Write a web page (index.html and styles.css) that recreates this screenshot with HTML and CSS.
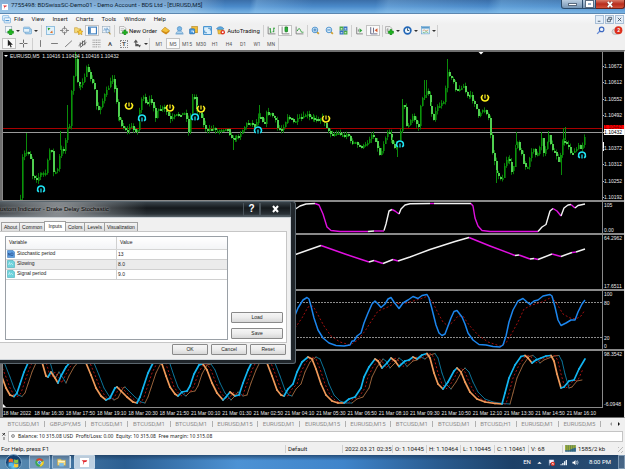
FILE: index.html
```html
<!DOCTYPE html>
<html lang="en">
<head>
<meta charset="utf-8">
<title>7755498: BDSwissSC-Demo01 - Demo Account - BDS Ltd - [EURUSD,M5]</title>
<link rel="stylesheet" href="styles.css">
</head>
<body>
<header class="titlebar">
  <svg class="app-logo" viewBox="0 0 16 16"><rect width="16" height="16" fill="#fff"/><path d="M3 4h10l-2 3H8l-3 6 1-6z" fill="#e0282e"/></svg>
  <h1>7755498: BDSwissSC-Demo01 - Demo Account - BDS Ltd - [EURUSD,M5]</h1>
  <div class="winctl">
    <button class="min" aria-label="Minimize"><i></i></button>
    <button class="max" aria-label="Maximize"><i></i></button>
    <button class="close" aria-label="Close"><svg viewBox="0 0 16 16"><path d="M3 2l10 12M13 2L3 14" stroke="#6b2a20" stroke-width="6"/><path d="M3 2l10 12M13 2L3 14" stroke="#fff" stroke-width="4"/></svg></button>
  </div>
</header>
<nav class="menubar">
  <svg class="ico" viewBox="0 0 16 16"><rect x="1" y="1" width="11" height="9" rx="1" fill="#dff0fc" stroke="#5fa3dc"/><rect x="4" y="5" width="11" height="9" rx="1" fill="#eef7fd" stroke="#4a90d0"/><path d="M6 10h7" stroke="#4a90d0" stroke-width="2"/></svg>
  <button>File</button><button>View</button><button>Insert</button><button>Charts</button><button>Tools</button><button>Window</button><button>Help</button>
  <div class="mdi">
    <button aria-label="Minimize chart"><svg viewBox="0 0 8 8"><path d="M2 6h3" stroke="#456"/></svg></button>
    <button aria-label="Restore chart"><svg viewBox="0 0 8 8"><path d="M3 3V1.500h3.500V4H5M1.500 3.500H5v3H1.500z" fill="none" stroke="#456"/></svg></button>
    <button aria-label="Close chart"><svg viewBox="0 0 8 8"><path d="M2 2l4 4M6 2L2 6" stroke="#456"/></svg></button>
  </div>
</nav>
<div class="toolbar">
  <div class="group lead">
    <button class="drop" aria-label="New chart"><svg class="ico" viewBox="0 0 16 16"><rect x="1" y="1" width="11" height="10" fill="#f4f8fb" stroke="#8aa0b4"/><path d="M8 6h4v3h3v4h-3v3H8v-3H5V9h3z" fill="#1fb51f" stroke="#0c7f10"/></svg></button>
    <button class="drop" aria-label="Profiles"><svg class="ico" viewBox="0 0 16 16"><rect x="4" y="5" width="11" height="9" rx="1" fill="#b9dbf2" stroke="#4c8dc2"/><rect x="1" y="2" width="11" height="9" rx="1" fill="#e4f2fb" stroke="#4c8dc2"/><path d="M2 4h9" stroke="#6fb0e0" stroke-width="2"/></svg></button>
  </div>
  <div class="group five">
    <button aria-label="Market watch"><svg class="ico" viewBox="0 0 16 16"><rect x="1" y="1" width="14" height="14" fill="#e2f1fa" stroke="#4f9ad0"/><path d="M3 3l5 1-4 4z" fill="#2ca02c"/><path d="M12 13l-5-1 4-4z" fill="#e07028"/></svg></button>
    <button aria-label="Data window"><svg class="ico" viewBox="0 0 16 16"><circle cx="8" cy="8" r="4.500" fill="none" stroke="#777" stroke-width="1.500"/><path d="M8 0v6M8 10v6M0 8h6M10 8h6" stroke="#777" stroke-width="1.500"/></svg></button>
    <button aria-label="Navigator"><svg class="ico" viewBox="0 0 16 16"><path d="M1 3h5l1 2h5v7H1z" fill="#f5d978" stroke="#c49a30"/><path d="M11 6l1.500 3 3.500.5-2.500 2.500.6 3.500-3.100-1.600-3.100 1.600.6-3.500L6 9.500 9.500 9z" fill="#ffd23e" stroke="#b98412"/></svg></button>
    <button class="on" aria-label="Terminal"><svg class="ico" viewBox="0 0 16 16"><rect x="1" y="2" width="14" height="12" fill="#fff" stroke="#3d7fc0" stroke-width="2"/><rect x="2" y="3" width="3" height="10" fill="#3d7fc0"/></svg></button>
    <button aria-label="Strategy tester"><svg class="ico" viewBox="0 0 16 16"><rect x="1" y="1" width="13" height="11" fill="#eef4f9" stroke="#90a6b8"/><path d="M3 9l2-5 2 4 2-5 2 5" fill="none" stroke="#4f8fc8"/><circle cx="10" cy="9" r="3" fill="#d7ecfa" stroke="#5588b8"/><path d="M12 11l3 4" stroke="#b59340" stroke-width="2"/></svg></button>
  </div>
  <div class="group orders">
    <button class="wide" aria-label="New Order"><svg class="ico" viewBox="0 0 16 16"><path d="M1 1h8l3 3v9H1z" fill="#fafafa" stroke="#888"/><path d="M3 5h6M3 8h6" stroke="#888"/><path d="M9 7h3v3h3v3h-3v3H9v-3H6v-3h3z" fill="#1fb51f" stroke="#0c7f10"/></svg>New Order</button>
    <button aria-label="MetaEditor"><svg class="ico" viewBox="0 0 16 16"><path d="M1 8l6-6 8 6-6 6z" fill="#f3c23c" stroke="#b67f14"/><path d="M1 8l8 3 6-3v2l-6 5-8-5z" fill="#d18c18"/></svg></button>
    <button aria-label="Cloud"><svg class="ico" viewBox="0 0 16 16"><circle cx="8" cy="5" r="4" fill="#7db9e8" stroke="#3b80bc"/><path d="M2 13c0-5 12-5 12 0z" fill="#bcdcf3" stroke="#5593c6"/><path d="M1 14h14" stroke="#6ea6d4" stroke-width="2"/></svg></button>
    <button aria-label="Market"><svg class="ico" viewBox="0 0 16 16"><rect x="5" y="1" width="10" height="11" fill="#f2bd34" stroke="#ae7a10"/><rect x="1" y="5" width="9" height="9" rx="1" fill="#4b9be0" stroke="#1d62a2"/><path d="M4 9h4v3" stroke="#fff" stroke-width="1.500" fill="none"/></svg></button>
    <button aria-label="Full screen"><svg class="ico" viewBox="0 0 16 16"><rect x="1" y="1" width="14" height="14" rx="1" fill="#dceffb" stroke="#4a96d2" stroke-width="2"/><path d="M9 4h4v4M7 12H3V8" fill="none" stroke="#3a86c4" stroke-width="1.500"/></svg></button>
    <button class="wide auto" aria-label="AutoTrading"><svg class="ico" viewBox="0 0 16 16"><path d="M1 5c3-5 10-5 13 0l-6 4z" fill="#58a9e4" stroke="#2b6ea8"/><path d="M3 7h10l-2 7H4z" fill="#f0c340" stroke="#b8881c"/><circle cx="12" cy="11" r="4" fill="#de3424"/><rect x="10.500" y="9.500" width="3" height="3" fill="#fff"/></svg>AutoTrading</button>
  </div>
  <div class="group tight">
    <button aria-label="Bar chart"><svg class="ico" viewBox="0 0 16 16"><path d="M2 1v13h13" fill="none" stroke="#777" stroke-width="1.500"/><path d="M6 4v8M6 5H4M6 11h2M12 3v8M12 4h2M12 10h-2" stroke="#219a2c" stroke-width="1.600"/></svg></button>
    <button class="on" aria-label="Candlesticks"><svg class="ico" viewBox="0 0 16 16"><path d="M2 1v13h13" fill="none" stroke="#777" stroke-width="1.500"/><path d="M9 0v12" stroke="#156f1c"/><rect x="7" y="2" width="5" height="8" fill="#26b336" stroke="#156f1c"/></svg></button>
    <button aria-label="Line chart"><svg class="ico" viewBox="0 0 16 16"><path d="M2 1v13h13" fill="none" stroke="#777" stroke-width="1.500"/><path d="M4 9c2-6 5-5 6-1s3 3 5 3" fill="none" stroke="#219a2c" stroke-width="1.600"/></svg></button>
  </div>
  <div class="group tight">
    <button aria-label="Zoom in"><svg class="ico" viewBox="0 0 16 16"><path d="M9 9l5 5" stroke="#d0a033" stroke-width="3"/><circle cx="7" cy="7" r="5" fill="#d4ebfb" stroke="#3d87c8" stroke-width="1.500"/><path d="M4 7h6M7 4v6" stroke="#2e75b6" stroke-width="1.500"/></svg></button>
    <button aria-label="Zoom out"><svg class="ico" viewBox="0 0 16 16"><path d="M9 9l5 5" stroke="#d0a033" stroke-width="3"/><circle cx="7" cy="7" r="5" fill="#d4ebfb" stroke="#3d87c8" stroke-width="1.500"/><path d="M4 7h6" stroke="#2e75b6" stroke-width="1.500"/></svg></button>
    <button aria-label="Tile windows"><svg class="ico" viewBox="0 0 16 16"><path d="M1 1h7v7H1zM8 8h7v7H8z" fill="#48a848"/><path d="M8 1h7v7H8zM1 8h7v7H1z" fill="#3571c4"/><path d="M3 4h3v2H3zM10 4h3v2h-3zM3 11h3v2H3zM10 11h3v2h-3z" fill="#e9f4e6"/></svg></button>
  </div>
  <div class="group shift">
    <button aria-label="Auto scroll"><svg class="ico" viewBox="0 0 16 16"><path d="M3 2v12h11M6 10V6" fill="none" stroke="#777" stroke-width="1.500"/><path d="M8 4l5 4-5 4z" fill="#2ea83c"/></svg></button>
    <button class="on" aria-label="Chart shift"><svg class="ico" viewBox="0 0 16 16"><path d="M3 2v12h12M8 3v9" fill="none" stroke="#557" stroke-width="1.500"/><path d="M15 4v7l-5-3.500z" fill="#d4552a"/></svg></button>
  </div>
  <div class="group">
    <button class="drop" aria-label="Indicators"><svg class="ico" viewBox="0 0 16 16"><path d="M1 1h8l3 3v9H1z" fill="#f2f2f2" stroke="#888"/><path d="M6 4c-2 0-2 1-2 7M3 7h4" fill="none" stroke="#777"/><path d="M9 6h3v3h3v4h-3v3H9v-3H6V9h3z" fill="#1fb51f" stroke="#0c7f10"/></svg></button>
    <button class="drop" aria-label="Periods"><svg class="ico" viewBox="0 0 16 16"><circle cx="8" cy="8" r="6" fill="#f1f8fd" stroke="#2468b8" stroke-width="3"/><path d="M8 4v4h3" fill="none" stroke="#245" stroke-width="1.500"/></svg></button>
    <button class="drop" aria-label="Templates"><svg class="ico" viewBox="0 0 16 16"><rect x="1" y="1" width="14" height="13" fill="#e6f2fa" stroke="#5a9acb"/><path d="M1 3h14" stroke="#5a9acb" stroke-width="3"/><path d="M3 8l3-1 3 2 4-2" fill="none" stroke="#d07a2c"/><path d="M3 11l3 1 3-2 4 2" fill="none" stroke="#3aa045"/></svg></button>
  </div>
  <div class="right">
    <button aria-label="Search"><svg class="ico" viewBox="0 0 16 16"><path d="M7 9l-5 5" stroke="#6a8fd8" stroke-width="2.500"/><circle cx="10" cy="6" r="4" fill="#eef3fb" stroke="#3c68c0" stroke-width="2"/></svg></button>
    <button class="notify" aria-label="Notifications"><svg viewBox="0 0 16 14"><ellipse cx="6" cy="8" rx="5" ry="4" fill="#dcdcdc" stroke="#b0b0b0"/><circle cx="10" cy="6" r="5.500" fill="#dc2f1c"/></svg><span>2</span></button>
  </div>
</div>
<div class="toolbar">
  <div class="group lead pair">
    <button class="on" aria-label="Cursor"><svg class="ico" viewBox="0 0 16 16"><path d="M5 1v12l3-3 2 5 2-1-2-4h4z" fill="#222"/></svg></button>
    <button aria-label="Crosshair"><svg class="ico" viewBox="0 0 16 16"><path d="M8 1v6M8 9v6M1 8h6M9 8h6" stroke="#555" stroke-width="1.500"/></svg></button>
  </div>
  <div class="group lines">
    <button aria-label="Vertical line"><svg class="ico" viewBox="0 0 16 16"><path d="M8 2v12" stroke="#666" stroke-width="1.500"/></svg></button>
    <button aria-label="Horizontal line"><svg class="ico" viewBox="0 0 16 16"><path d="M2 8h12" stroke="#666" stroke-width="1.500"/></svg></button>
    <button aria-label="Trendline"><svg class="ico" viewBox="0 0 16 16"><path d="M2 14L14 3" stroke="#666" stroke-width="1.500"/></svg></button>
    <button aria-label="Channel"><svg class="ico" viewBox="0 0 16 16"><path d="M1 12L13 2M4 15L15 6M4 6v8M8 3v9M12 3v8" stroke="#555" stroke-width="1.500"/></svg></button>
    <button aria-label="Fibonacci"><svg class="ico" viewBox="0 0 16 16"><path d="M1 2h14M1 6h14M1 10h14M1 14h8M11 14h4" stroke="#888" stroke-width="1.500" stroke-dasharray="2 1"/></svg></button>
    <button aria-label="Text" class="letter">A</button>
    <button aria-label="Text label" class="letter"><b>T</b></button>
    <button class="drop" aria-label="Arrows"><svg class="ico" viewBox="0 0 16 16"><path d="M5 1l4 5H6v3h4v2l4-1-2 5-2-2H4V6H1z" fill="#555"/></svg></button>
  </div>
  <div class="group frames">
    <button>M1</button><button class="on">M5</button><button>M15</button><button>M30</button><button>H1</button><button>H4</button><button>D1</button><button>W1</button><button>MN</button>
  </div>
</div>
<main class="workspace">
  <section class="chart">
    <div class="plot p1">
      <svg id="price" viewBox="3 52 599 148" preserveAspectRatio="none"></svg>
      <div class="quote">EURUSD,M5&nbsp; 1.10416 1.10434 1.10416 1.10432</div>
    </div>
    <div class="axis a1"><span>1.10672</span><span>1.10612</span><span>1.10552</span><span>1.10492</span><span class="bid">1.10432<b>1.10442</b></span><span>1.10372</span><span>1.10312</span><span>1.10252</span><span>1.10192</span></div>
    <div class="plot sub"><svg id="cycle" viewBox="3 202 599 31" preserveAspectRatio="none"></svg></div>
    <div class="axis sub"><span>105</span><span>0.00</span></div>
    <div class="plot sub"><svg id="trend" viewBox="3 235 599 54" preserveAspectRatio="none"></svg></div>
    <div class="axis sub"><span>64.2962</span><span>17.6511</span></div>
    <div class="plot sub"><svg id="stoch" viewBox="3 291 599 58" preserveAspectRatio="none"></svg></div>
    <div class="axis sub levels"><span>100</span><span>80</span><span class="gap"></span><span>20</span><span>0</span></div>
    <div class="plot sub"><svg id="drake" viewBox="3 351 599 56" preserveAspectRatio="none"></svg></div>
    <div class="axis sub"><span>98.3542</span><span>-6.0948</span></div>
    <div class="times"><span>18 Mar 2022</span><span>18 Mar 16:30</span><span>18 Mar 17:50</span><span>18 Mar 19:10</span><span>18 Mar 20:30</span><span>18 Mar 21:50</span><span>21 Mar 00:10</span><span>21 Mar 01:30</span><span>21 Mar 02:50</span><span>21 Mar 04:10</span><span>21 Mar 05:30</span><span>21 Mar 06:50</span><span>21 Mar 08:10</span><span>21 Mar 09:30</span><span>21 Mar 10:50</span><span>21 Mar 12:10</span><span>21 Mar 13:30</span><span>21 Mar 14:50</span><span>21 Mar 16:10</span></div>
  </section>
  <section class="dialog" role="dialog" aria-label="Custom Indicator">
    <div class="dlg-title"><h2>ustom Indicator - Drake Delay Stochastic</h2><button aria-label="Help">?</button><button class="x" aria-label="Close"><svg viewBox="0 0 16 16"><path d="M3 2l10 12M13 2L3 14" stroke="#fff" stroke-width="4"/></svg></button></div>
    <div class="dlg-body">
      <div class="dlg-tabs" role="tablist"><button role="tab">About</button><button role="tab">Common</button><button role="tab" class="sel">Inputs</button><button role="tab">Colors</button><button role="tab">Levels</button><button role="tab">Visualization</button></div>
      <div class="page">
        <div class="list">
          <table>
            <thead><tr><th>Variable</th><th>Value</th></tr></thead>
            <tbody>
              <tr><td><svg class="type" viewBox="0 0 16 16"><path d="M1 1h11l3 3v11H1z" fill="#5e9fe0" stroke="#2d68ae"/><path d="M3 11V6l3 5V6M8 11V6h4M8 11h4V6" fill="none" stroke="#1c3f7c"/></svg>Stochastic period</td><td>13</td></tr>
              <tr><td><svg class="type" viewBox="0 0 16 16"><path d="M1 1h11l3 3v11H1z" fill="#6fd3dc" stroke="#35a3b0"/><path d="M3 10l2-5 2 5M8 6l4 4" fill="none" stroke="#fff"/></svg>Slowing</td><td>8.0</td></tr>
              <tr><td><svg class="type" viewBox="0 0 16 16"><path d="M1 1h11l3 3v11H1z" fill="#6fd3dc" stroke="#35a3b0"/><path d="M3 10l2-5 2 5M8 6l4 4" fill="none" stroke="#fff"/></svg>Signal period</td><td>9.0</td></tr>
            </tbody>
          </table>
        </div>
        <div class="side"><button>Load</button><button>Save</button></div>
      </div>
      <div class="actions"><button>OK</button><button>Cancel</button><button>Reset</button></div>
    </div>
  </section>
</main>
<nav class="charttabs">
  <button>BTCUSD,M1</button><button>GBPJPY,M5</button><button>BTCUSD,M1</button><button>BTCUSD,M1</button><button>BTCUSD,M1</button><button>EURUSD,M15</button><button>EURUSD,M1</button><button>EURUSD,M15</button><button>EURUSD,M15</button><button>BTCUSD,M1</button><button>BTCUSD,M1</button><button>BTCUSD,H1</button><button>EURUSD,M1</button><button>EURUSD,M5</button>
  <div class="arrows"><button aria-label="Scroll left" class="l"></button><button aria-label="Scroll right" class="r"></button></div>
</nav>
<section class="terminal">
  <button class="tclose" aria-label="Close terminal"><svg viewBox="0 0 8 16"><path d="M1 1l5 5M6 1L1 6" stroke="#333" stroke-width="2"/><path d="M4 9v6" stroke="#aaa" stroke-width="4"/></svg></button>
  <div class="balance"><i></i><span>Balance: 10 315.08 USD&nbsp; Profit/Loss: 0.00&nbsp; Equity: 10 315.08&nbsp; Free margin: 10 315.08</span></div>
</section>
<footer class="status">
  <span class="help">For Help, press F1</span><span class="s57">Default</span><span class="s50">2022.03.21 02:35</span><span class="s34">O: 1.10445</span><span class="s34">H: 1.10464</span><span class="s34">L: 1.10445</span><span class="s34">C: 1.10461</span><span class="s34">V: 68</span><span class="conn"><svg viewBox="0 0 24 14"><rect width="24" height="14" fill="#3b6f96"/><path d="M0 0h24v5L14 8l-4 3H0z" fill="#a3b13e"/><path d="M4 0v14M8 0v14M12 0v14M16 0v14M20 0v14" stroke="#2c5c50" stroke-width="1"/></svg>1585/2 kb</span>
</footer>
<footer class="taskbar">
  <button class="orb" aria-label="Start"><svg viewBox="0 0 32 32"><defs><radialGradient id="g" cx="50%" cy="75%"><stop offset="0" stop-color="#6fd0f0"/><stop offset="1" stop-color="#123f70"/></radialGradient></defs><circle cx="16" cy="16" r="15" fill="url(#g)" stroke="#8fb8d6" stroke-width="1.500"/><path d="M7 10c3-2 5-2 8 0v6c-3-2-5-2-8 0z" fill="#f2662b"/><path d="M17 10c3 2 5 2 8 0v6c-3 2-5 2-8 0z" fill="#8cc63f"/><path d="M7 18c3-2 5-2 8 0v6c-3-2-5-2-8 0z" fill="#58b6ee"/><path d="M17 18c3 2 5 2 8 0v6c-3 2-5 2-8 0z" fill="#fbc92e"/></svg></button>
  <button class="task" aria-label="Chrome"><svg viewBox="0 0 16 16"><circle cx="8" cy="8" r="7.500" fill="#3aa655"/><path d="M1.500 4.500A7.500 7.500 0 0 1 15 5H8z" fill="#e33b2e"/><path d="M15 5a7.500 7.500 0 0 1-7 10.500L11 9z" fill="#fbcb2c"/><circle cx="8" cy="8" r="3.600" fill="#fff"/><circle cx="8" cy="8" r="2.700" fill="#3f82ea"/></svg></button>
  <button class="task stack" aria-label="Explorer"><svg viewBox="0 0 16 16"><path d="M1 2h6l1 2h7v9H1z" fill="#f6dd84" stroke="#c9a440"/><path d="M4 9h8v6H4z" fill="#7cbce6"/><path d="M2 6h12" stroke="#fff6cc" stroke-width="2"/></svg></button>
  <button class="task on" aria-label="MetaTrader"><svg viewBox="0 0 16 16"><rect width="16" height="16" fill="#fff"/><path d="M3 4h10l-2 3H8l-3 6 1-6z" fill="#e0282e"/></svg></button>
  <div class="tray">
    <span>EN</span>
    <svg viewBox="0 0 16 16"><path d="M3 11l5-5 5 5z" fill="#fff"/></svg>
    <svg viewBox="0 0 16 16"><path d="M3 15V2h10v7H4" fill="#eef" stroke="#dde"/><circle cx="11" cy="11" r="5" fill="#df3424"/><path d="M9 9l4 4M13 9l-4 4" stroke="#fff" stroke-width="1.500"/></svg>
    <svg viewBox="0 0 16 16"><path d="M1 14h3v-2H1zM5 14h3V9H5zM9 14h3V5H9zM13 14h3V2h-3z" fill="#e8f0f8"/></svg>
    <svg viewBox="0 0 16 16"><path d="M1 6h3l4-4v12l-4-4H1z" fill="#fff"/><path d="M10 5q2 3 0 6M12 3q4 5 0 10" fill="none" stroke="#dde8f2" stroke-width="1.500"/></svg>
    <time>8:00 PM</time>
  </div>
  <button class="peek" aria-label="Show desktop"></button>
</footer>
<script src="chart.js"></script>
</body>
</html>
```
FILE: styles.css
```css
* { box-sizing: border-box; margin: 0; padding: 0; }
html, body { height: 100%; }
body {
  display: flex; flex-direction: column; overflow: hidden;
  font: 6px/8px Roboto, "Liberation Sans", sans-serif; color: #222; background: #f0f0f0;
}
button { border: 0; background: none; font: inherit; color: inherit; display: flex; align-items: center; justify-content: center; white-space: nowrap; }
svg { display: block; }
h1, h2 { font-size: inherit; font-weight: normal; white-space: nowrap; }
.ico { width: 9px; height: 9px; flex: none; }

.titlebar {
  flex: none; height: 13px; display: flex; align-items: center; padding-left: 2px; color: #0c1c30;
  background:
    linear-gradient(100deg, transparent 40%, #9fd0f555 41%, transparent 50%, transparent 60%, #a5d4f544 62%, transparent 78%, #8cc8f055 80%, transparent),
    linear-gradient(90deg, #b8d8ee99, #c8e0f066 30%, transparent 36%),
    linear-gradient(#3a6ea8, #4a8aca 50%, #79b4e4);
}
.titlebar h1 { flex: 1; padding-left: 3px; line-height: 10px; align-self: flex-start; }
.app-logo { width: 6px; height: 6px; }
.winctl { display: flex; align-self: flex-start; height: 9px; }
.winctl button { border: 1px solid #2c4c6c; border-top: 0; background: linear-gradient(#b9cde0, #7695b4); }
.winctl .min { width: 22px; border-radius: 0 0 0 3px; }
.winctl .max { width: 13px; border-left: 0; }
.winctl .close { width: 29px; border-left: 0; border-color: #6c2018; border-radius: 0 0 3px 0; background: linear-gradient(#d87a68, #b82c1c 50%, #cf5038); }
.min i { width: 9px; height: 3px; background: #fff; border: 1px solid #5a6c80; }
.max i { width: 7px; height: 6px; border: 2px solid #fff; outline: 1px solid #5a6c80; }
.close svg { width: 8px; height: 7px; }

.menubar { flex: none; height: 11px; display: flex; align-items: center; padding-left: 2px; background: linear-gradient(#fafbfd, #f0f0f0); border-top: 1px solid #5c87b0; }
.menubar > button { padding: 0 4px; }
.menubar > .ico { margin-right: -1px; }
.mdi { margin-left: auto; display: flex; gap: 1px; padding-right: 1px; }
.mdi button { width: 9px; height: 9px; background: #e3edf8; border: 1px solid #a9bfd6; }
.mdi svg { width: 7px; height: 7px; }

.toolbar { flex: none; height: 13px; display: flex; align-items: center; background: #f0f0f0; }
.group { display: flex; align-items: center; height: 12px; border-right: 1px solid #cfcfcf; }
.group button { width: 14px; height: 11px; }
.group .on { background: #fafafa; border: 1px solid #c3c3c3; }
.lead { padding: 0 2px 0 3px; }
.five { padding: 0 1px; }
.orders { padding: 0 1px 0 3px; }
.tight { padding: 0 1px 0 0; }
.shift { padding-right: 2px; }
.group .drop { width: 18px; gap: 2px; }
.drop::after { content: ""; border: 2px solid transparent; border-top-color: #333; border-bottom: 0; }
.group .wide { width: 40px; gap: 1px; color: #111; }
.group .auto { width: 48px; gap: 2px; }
.right { margin-left: auto; display: flex; align-items: center; gap: 6px; padding-right: 2px; }
.right button { position: relative; }
.notify svg { width: 12px; height: 10px; }
.notify span { position: absolute; right: 3px; top: 0; color: #fff; font-size: 5px; font-weight: bold; }
.pair { padding-left: 2px; }
.letter { color: #555; font-weight: bold; }
.letter b { border: 1px dotted #888; line-height: 6px; padding: 0 1px; }
.frames { padding-left: 2px; color: #555; font-size: 5px; }

.workspace { flex: 1; min-height: 0; position: relative; background: #000; border: solid #6f6f6f; border-width: 2px 1px 1px 2px; border-right-color: #f0f0f0; }
.chart {
  height: 100%; display: grid; grid-template-columns: minmax(0, 1fr) 22px;
  grid-template-rows: minmax(0, 148fr) minmax(0, 33fr) minmax(0, 56fr) minmax(0, 60fr) minmax(0, 58fr) 10px;
  font: 5px/6px "Liberation Sans", sans-serif; color: #e8e8e8; border-left: 1px solid #888;
}
.plot { position: relative; min-height: 0; }
.plot svg { width: 100%; height: 100%; }
.sub { border-top: 2px solid #8a8a8a; }
.quote { position: absolute; left: 7px; top: 1px; white-space: nowrap; }
.quote::before { content: ""; position: absolute; left: -6px; top: 2px; border: 2px solid transparent; border-top-color: #fff; border-bottom: 0; }
.axis { display: flex; flex-direction: column; justify-content: space-between; border-left: 1px solid #8a8a8a; padding-left: 1px; min-height: 0; }
.a1 { padding-top: 11px; background: linear-gradient(#fff, #fff) 0 90px / 1px 9px no-repeat; }
.a1 span { position: relative; }
.a1 span::before { content: ""; position: absolute; left: -1px; top: 3px; width: 1px; height: 1px; background: #bbb; }
.a1 .bid { background: #fff; color: #000; }
.bid b { position: absolute; left: 0; right: 0; bottom: 6px; line-height: 4px; background: #f00; color: #600; font-weight: normal; }
.levels .gap { flex: 1; max-height: 24px; }
.times { grid-column: 1 / -1; display: flex; border-top: 1px solid #8a8a8a; padding-top: 2px; margin-right: 21px; }
.times span { flex: 0 0 5.22%; white-space: nowrap; }

.dialog { position: absolute; left: -2px; top: 149px; width: 296px; height: 163px; display: flex; flex-direction: column; padding: 0 4px 3px 0; background: #20262b; border: 1px solid #5b676f; border-left: 0; border-radius: 0 4px 3px 0; font: 5px/7px "Liberation Sans", sans-serif; color: #222; }
.dlg-title { flex: none; height: 15px; display: flex; align-items: center; background: radial-gradient(circle at 20% 60%, #8a8f93 0, transparent 38%), linear-gradient(#39434a, #15191c 40%, #2a3136 80%, #5a646a); color: #000; }
.dlg-title h2 { flex: 1; font-size: 6px; text-shadow: 0 0 3px #aaa, 0 0 3px #999; }
.dlg-title button { width: 17px; height: 13px; font: bold 10px/12px "Liberation Sans", sans-serif; color: #fff; border: 1px solid #4a545b; border-top: 0; }
.dlg-title .x { width: 31px; }
.dlg-title svg { width: 9px; height: 8px; }
.dlg-body { flex: 1; display: flex; flex-direction: column; background: #f0f0f0; border: 1px solid #cdd3d8; border-left: 0; }
.dlg-tabs { display: flex; align-items: flex-end; height: 13px; padding-left: 1px; }
.dlg-tabs button { height: 9px; padding: 0 2px; border: 1px solid #a0a0a0; border-bottom: 0; margin-right: -1px; background: linear-gradient(#f4f4f4, #dcdcdc); }
.dlg-tabs .sel { height: 11px; background: #fff; padding: 0 3px 2px; margin-bottom: -1px; }
.page { flex: 1; display: flex; margin-right: 3px; padding: 4px 3px 2px 5px; gap: 3px; background: #fff; border: 1px solid #c6c6c6; border-left: 0; }
.list { flex: 1; border: 1px solid #9aa0a6; background: #fff; }
table { width: 100%; border-collapse: collapse; table-layout: fixed; }
th { height: 12px; text-align: left; font-weight: normal; padding-left: 3px; border-bottom: 1px solid #d5d5d5; background: linear-gradient(#fff, #f3f4f6); }
td { height: 10px; padding-left: 1px; border-bottom: 1px solid #d0d0d0; }
th + th, td + td { border-left: 1px solid #d0d0d0; }
tr:nth-child(2) td { background: #ebebeb; }
.type { display: inline-block; width: 8px; height: 8px; vertical-align: middle; margin-right: 2px; }
.side { width: 52px; display: flex; flex-direction: column; justify-content: flex-end; gap: 5px; padding-bottom: 1px; }
.side button, .actions button { height: 11px; border: 1px solid #8a8a8a; border-radius: 1px; background: linear-gradient(#f6f6f6, #ececec 50%, #d8d8d8); }
.actions { flex: none; height: 16px; display: flex; justify-content: flex-end; gap: 3px; padding: 1px 4px 0; }
.actions button { width: 36px; }

.charttabs { flex: none; height: 12px; display: flex; align-items: center; padding-left: 3px; color: #8d8d8d; background: #f0f0f0; }
.charttabs > button { flex: 1 1 auto; height: 6px; border-right: 1px solid #b0b0b0; }
.arrows { display: flex; gap: 6px; padding: 0 5px 0 9px; }
.arrows .l { border: 2px solid transparent; border-right-color: #999; border-left: 0; }
.arrows .r { border: 2px solid transparent; border-left-color: #111; border-right: 0; }

.terminal { flex: none; height: 12px; display: flex; align-items: center; gap: 2px; padding: 0 2px; }
.tclose svg { width: 4px; height: 9px; }
.balance { flex: 1; height: 11px; display: flex; align-items: center; gap: 3px; padding-left: 2px; background: #fff; border: 1px solid #c4c4c4; white-space: nowrap; font: 5px/8px "Noto Sans", "Liberation Sans", sans-serif; }
.balance i { width: 4px; height: 4px; border-radius: 2px; background: #ccc; border: 1px solid #999; }

.status { flex: none; height: 13px; display: flex; align-items: center; padding-right: 2px; white-space: nowrap; background: #f0f0f0; }
.status span { padding-left: 2px; border-left: 1px solid #cfcfcf; }
.status .help { flex: 1; border: 0; padding-left: 1px; }
.s57 { width: 57px; } .s50 { width: 50px; } .s34 { width: 34px; }
.status .conn { width: 61px; display: flex; align-items: center; gap: 2px; background: repeating-linear-gradient(135deg, #bbb 0 1px, transparent 1px 3px) right bottom / 5px 6px no-repeat; }
.conn svg { width: 11px; height: 7px; }

.taskbar {
  flex: none; height: 14px; display: flex; align-items: center; padding-left: 5px; color: #fff;
  background: linear-gradient(#1c3a5cbb, transparent 40%), linear-gradient(90deg, #5d8fb4, #2c5f92 20%, #4d92d4 38%, #3f84ca 55%, #2a5c90 70%, #1c4068 82%, #2b4f74);
}
.orb { width: 17px; height: 17px; margin-right: 7px; }
.orb svg { width: 17px; height: 17px; }
.task { width: 21px; height: 14px; border: 1px solid #c8dcec88; border-radius: 1px; background: #ffffff33; margin-right: 2px; }
.task svg { width: 9px; height: 9px; }
.stack { width: 18px; box-shadow: 2px 0 0 -1px #c8dcec; margin-right: 4px; }
.task.on { background: #dfeaf2cc; }
.tray { margin-left: auto; display: flex; align-items: center; gap: 5px; }
.tray svg { width: 7px; height: 7px; }
.tray time { margin-left: 5px; }
.peek { width: 7px; height: 14px; margin-left: 7px; border: 1px solid #7f99b2; background: #ffffff22; }
```
FILE: chart.js
```js
const NS = "http://www.w3.org/2000/svg";
const parse = s => s.trim().split(/\s+/).map(p => p.split(",").map(Number));
function add(host, tag, attrs) {
  const el = document.createElementNS(NS, tag);
  for (const k in attrs) el.setAttribute(k, attrs[k]);
  host.appendChild(el);
}
const line = (host, pts, stroke, width, extra) =>
  add(host, "polyline", Object.assign({ points: pts.map(p => p.join(",")).join(" "), fill: "none", stroke, "stroke-width": width, "stroke-linejoin": "round" }, extra));
function at(pts, x) {
  for (let i = 1; i < pts.length; i++) {
    if (x <= pts[i][0]) {
      const [x0, y0] = pts[i - 1], [x1, y1] = pts[i];
      return y0 + (y1 - y0) * (x - x0) / (x1 - x0);
    }
  }
  return pts[pts.length - 1][1];
}
let seed = 7;
const rnd = () => (seed = (seed * 16807) % 2147483647) / 2147483647;

/* Price candles */
const price = document.getElementById("price");
add(price, "path", { d: "M3 128.5H602", stroke: "#a80000" });
add(price, "path", { d: "M3 132.5H602", stroke: "#9a9a9a" });
const path = parse(`20,200 21,184 22,158 25,152 28,153 30,158 32,175 36,179 40,174 46,172 48,150 52,150 53,173 57,170 60,150 64,150
66,130 68,122 70,132 71,92 73,75 75,60 76,82 79,86 83,79 86,68 90,78 94,90 96,106 98,110 101,104 104,95 108,87 112,78 115,92 118,118
122,127 127,131 130,125 134,131 137,130 139,110 141,98 143,98 146,106 150,98 153,107 155,118 158,110 163,107 166,112 170,120 174,116
179,114 184,113 187,120 188,132 190,115 192,97 194,97 196,108 200,112 203,125 207,131 212,128 217,131 222,129 226,127 229,134
233,139 237,137 240,133 243,128 246,124 250,122 254,127 257,120 259,111 261,121 264,122 266,113 270,114 274,118 277,128 281,130
284,124 287,116 290,119 293,123 297,119 302,118 306,114 310,119 314,118 318,119 322,118 325,124 328,132 332,134 338,133 343,136
347,133 350,142 355,143 358,147 362,146 366,145 368,140 371,135 375,140 378,153 380,155 383,143 386,133 388,130 391,139 393,147
396,146 399,142 400,130 401,106 404,107 405,125 408,126 412,116 415,122 418,127 420,106 423,96 426,91 429,98 432,120 434,117
436,108 440,104 444,103 446,72 449,76 452,78 455,88 458,91 462,85 464,87 466,96 470,96 475,105 478,117 481,112 483,108 486,113
489,120 490,135 491,148 494,160 496,174 499,177 502,178 504,165 507,158 509,163 511,171 513,165 515,148 517,142 519,150 522,158
524,167 527,168 530,155 533,149 535,155 538,153 541,138 543,155 546,145 548,136 551,150 555,153 558,160 560,155 562,142 565,142
567,145 570,152 574,152 578,146 581,150 583,138 585,134`);
let prev = 200;
for (let i = 0; i < 290; i++) {
  const x = Math.round(20 + i * 1.95);
  const close = at(path, x) + (rnd() - 0.5) * 3;
  const top = Math.min(prev, close), bottom = Math.max(prev, close);
  const down = close > prev;
  add(price, "path", { d: `M${x + 0.5} ${top - rnd() * 4}V${bottom + rnd() * 4}`, stroke: "#087a08" });
  add(price, "rect", { x: x, y: Math.round(top), width: down ? 2 : 1.6, height: Math.max(2, Math.round(bottom - top)), fill: down ? "#50cf50" : "#0a930a" });
  prev = close;
}
parse(`26,133,152 60,131,150 67,105,130 75,52,70 112,76,84 447,59,80 424,80,100 426,80,98 192,94,110 259,105,118 402,99,115 233,139,150
397,146,157 496,170,183 561,155,175 563,128,145 565,127,140 516,132,145 541,132,142 548,131,140`)
  .forEach(([x, a, b]) => add(price, "path", { d: `M${x + 0.5} ${a}V${b}`, stroke: "#0a8c0a" }));
const mark = (x, y, up) => {
  const c = up ? "#1fe4f4" : "#fff01e", s = up ? 1 : -1;
  add(price, "ellipse", { cx: x, cy: y, rx: 4, ry: 3.8, fill: "#000" });
  add(price, "path", { d: `M${x - 2.2} ${y + 3 * s}C${x - 4.6} ${y + 1 * s} ${x - 3.4} ${y - 3 * s} ${x} ${y - 3 * s}S${x + 4.6} ${y + 1 * s} ${x + 2.2} ${y + 3 * s}`, fill: "none", stroke: c, "stroke-width": 1.6 });
  add(price, "path", { d: `M${x} ${y - 0.5 * s}V${y + 3.5 * s}`, stroke: c, "stroke-width": 1.2 });
};
parse("129,106 170,108 201,109 326,119 485,98").forEach(([x, y]) => mark(x, y, false));
parse("41,189 142,118 195,117 258,130 400,144 582,155").forEach(([x, y]) => mark(x, y, true));
add(price, "path", { d: "M478.500 52h5l-2.500 2.500z", fill: "#fff" });

/* Two-colour lines: W = rising, M = falling */
function twoTone(id, parts) {
  const host = document.getElementById(id);
  parts.trim().split("\n").forEach(row => line(host, parse(row.trim().slice(2)), row.trim()[0] === "W" ? "#f2f2f2" : "#e010e0", 1.4));
}
twoTone("cycle", `W 294,210 300,206 306,204 315,203.5
M 315,203.5 319,205 323,214 327,227 331,230.5 340,231.5 368,231.5
W 368,231.5 374,231
M 374,231 384,231
W 384,230.5 386,224 389,211 392,209.5
M 392,209.5 395,211 399,214
W 399,214 401,209 405,205 410,203.7 430,203.5
M 430,203.5 434,203.5
W 434,203.5 471,203.5
M 471,203.5 473,206 475,218 478,226 482,230.5 490,231.5 538,231.5
W 538,231.5 542,227 546,224.5 550,211 553,208.5
M 553,208.5 557,211 561,216
W 561,216 564,208 568,205 571,204.5
M 571,204.5 575,208
W 575,208 578,205.5 585,204`);
twoTone("trend", `W 294,255 321,245.5
M 321,245.5 345,254 369,262
W 369,262 374,260.5
M 374,260.5 383,263.5
W 383,263.5 393,259.5
M 393,259.5 398,261
W 398,261 410,257 430,249.5 455,241.5 469,237.5
M 469,237.5 490,246 515,255.5
W 515,255.5 519,255
M 519,255 530,259
W 530,259 534,258.5
M 534,258.5 538,259.5
W 538,259.5 552,254
M 552,254 561,256.5
W 561,256.5 572,252.5
M 572,252.5 576,252
W 576,252 585,249`);

/* Stochastic */
const stoch = document.getElementById("stoch");
add(stoch, "path", { d: "M3 302.5H602M3 337.5H602", stroke: "#8c8c8c", "stroke-dasharray": "2 1" });
line(stoch, parse(`295,328 302,318 308,307 313,306 318,315 324,326 331,336 340,342 350,345 358,340 365,331 372,320 378,311 388,307
395,303 402,304 410,302 420,299 428,296 433,303 438,313 443,322 448,326 453,322 458,316 463,316 469,325 478,335 488,342 500,346
506,343 512,333 518,322 524,309 532,305 542,302 552,297 557,304 563,314 570,318 576,319 581,316 585,310`), "#a01010", 1, { "stroke-dasharray": "2 2" });
line(stoch, parse(`294,318 298,308 303,300 307,297.5 309,299 311,306 314,318 318,330 323,338 329,343 336,345.5 344,346 350,345 352,341
354,341 357,336 361,333 364,323 368,313 372,304 375,301 378,304 381,307.5 385,304 388,299 391,297.5 394,302 399,308.5 403,303 408,300
413,296.5 418,298.5 422,295.5 427,294.5 429,298 432,309 436,325 439,333 442,335.5 445,334 448,326 451,318 454,311.5 457,310.5 462,317
465,324 468,333 473,340 479,344.5 486,345 493,346.5 500,347 503,345 506,336 509,322 513,310 518,301 523,298.5 527,302 530,304.5
534,301 538,300 543,296 550,294.5 552,296 555,307 558,320 561,325.5 566,323 571,320 575,320 578,312 582,304 585,300`), "#1c86ee", 1.5);

/* Delayed stochastic: main line, dotted signal, trailing line */
const drake = document.getElementById("drake");
const base = parse(`-10,355 -4,362 2,377 6,388 10,395 14,396.5 17,393 20,384 24,372 28,363 32,358 40,356 42,362 46,376 48,377 51,372 55,378 58,383
61,376 66,367 72,360 80,357 86,363 91,375 96,388 101,396 106,400 110,398 115,388 117,387 121,391 127,397 133,402 137,403 140,397
143,388 148,373 153,363 158,359 162,364 166,376 170,387 175,394 178,396 182,392 187,391 190,386 194,374 199,365 203,364 207,370
212,383 217,393 223,400 226,397 230,392 235,396 239,395 243,383 248,370 253,360 262,358 267,363 272,376 277,390 281,395 284,396
288,389 293,384 297,372 302,362 308,357 312,359 316,369 321,384 326,395 332,401 338,403 344,403 349,399 355,397 361,388 364,377
369,367 375,359 378,361 382,368 387,363 391,358 395,361 399,366.5 405,361 409,360 413,357 417,359 422,355 427,353.5 430,358
434,373 438,384 443,389 448,382 454,371 457,368 461,372 465,382 470,392 477,399 485,402 495,403.5 502,404 505,393 509,378 515,365
521,356.5 525,355.5 528,358 532,363 536,360 541,358 546,356 551,355.5 554,361 557,374 561,388 564,387 569,381 574,380 579,369 585,359`);
function directional(shift, rise, fall, width) {
  for (let i = 1; i < base.length; i++) {
    const a = base[i - 1], b = base[i];
    if (b[0] + shift > 586) break;
    line(drake, [[a[0] + shift, a[1]], [b[0] + shift, b[1]]], b[1] < a[1] ? rise : fall, width, { "stroke-linecap": "round" });
  }
}
directional(8, "#94603a", "#0b7196", 1);
line(drake, base.map(([x, y]) => [x + 4, y]).filter(p => p[0] < 586), "#a81414", 1, { "stroke-dasharray": "2 2" });
directional(0, "#12b4f0", "#f09a5a", 1.7);
add(drake, "path", { d: "M3 404l3 3H3z", fill: "#fff" });
```
